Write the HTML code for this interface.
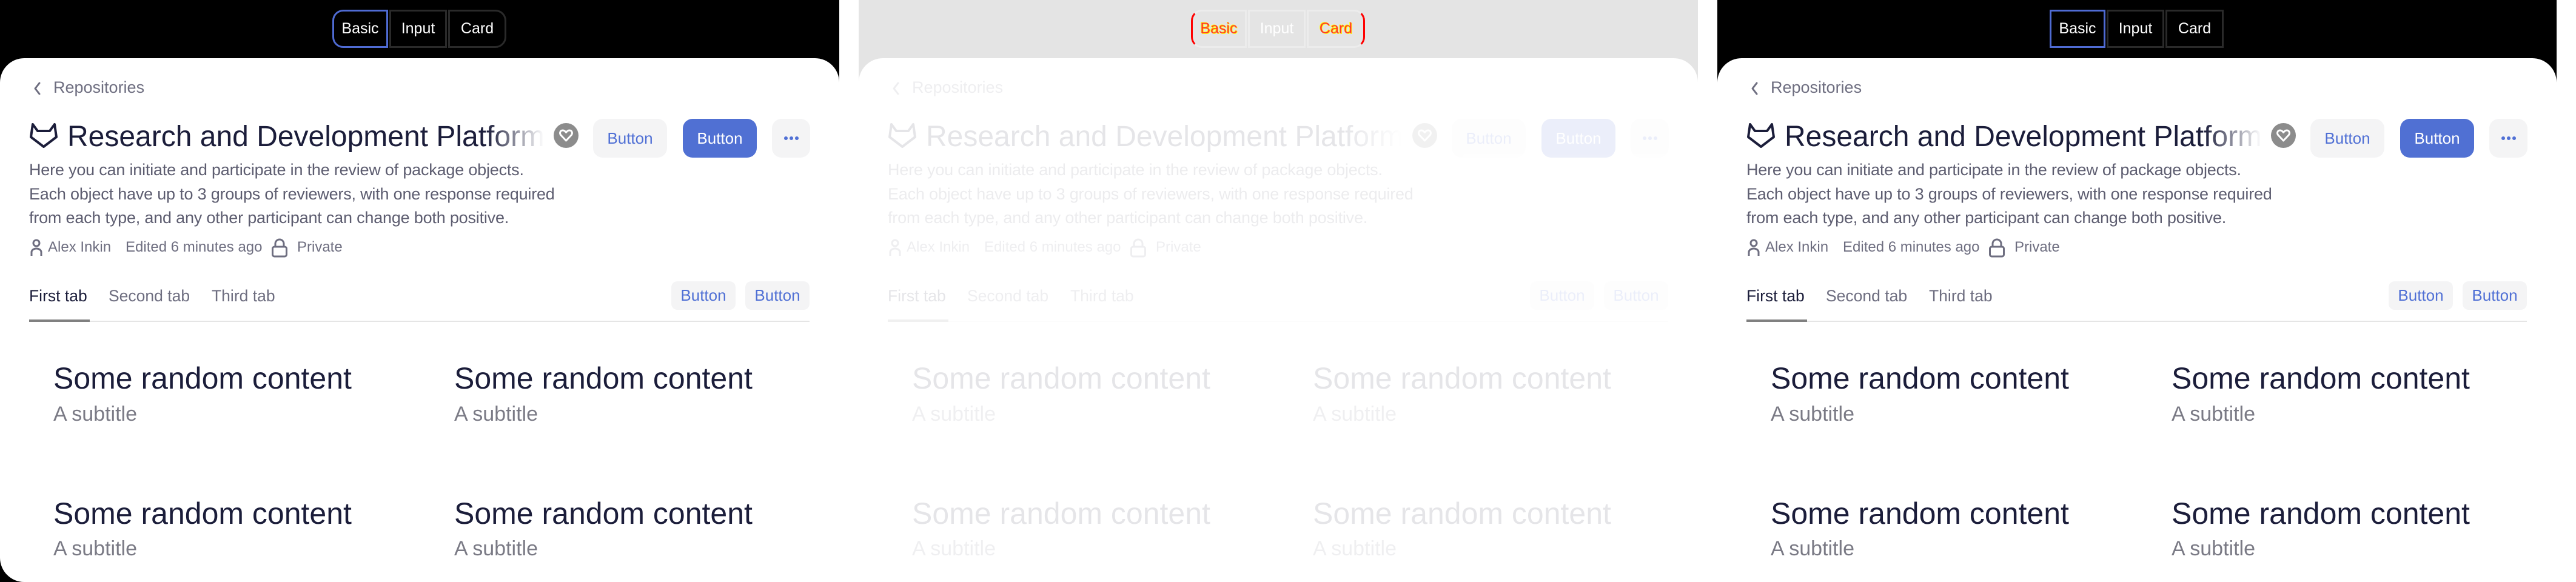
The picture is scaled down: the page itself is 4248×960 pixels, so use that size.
<!DOCTYPE html>
<html><head><meta charset="utf-8"><style>
*{box-sizing:border-box;margin:0;padding:0}
body{width:4248px;height:960px;background:#fff;position:relative;overflow:hidden;font-family:"Liberation Sans",sans-serif}
.panel{position:absolute;top:0;width:1384px;height:960px;background:#000;overflow:hidden}
.p2{background:#e4e4e4}
.pills{position:absolute;left:548px;top:16px;height:63px;width:287px;display:flex}
.pills div{height:63px;display:flex;align-items:center;justify-content:center;color:#fff;font-size:25px;border:3px solid #2a2a2a}
.pills .b{width:92px;border-color:#4f6bd3;border-radius:18px 0 0 18px}
.pills .i{width:95px;margin-left:2px}
.pills .c{width:96px;margin-left:2px;border-radius:0 18px 18px 0}
.p3 .pills div{border-radius:0!important}
.p2 .pills div{border-color:#ececec;color:#fff}
.p2 .pills .b{border-left:3px solid #f00}
.p2 .pills .c{border-right:3px solid #f00}
.p2 .pills .b,.p2 .pills .c{color:#f33;text-shadow:1px 1px 0 #ff0,-1px -1px 0 #ff0}
.card{position:absolute;left:0;top:96px;width:1384px;height:864px;background:#fff;border-radius:40px 40px 0 0}
.p1 .card{border-radius:40px 40px 0 40px}
.in{position:absolute;left:0;top:-96px;width:1384px;height:960px}
.p2 .in{opacity:.11}
.a{position:absolute;white-space:nowrap}
.grey{color:#6e6e80}
.dark{color:#1b1d3a}
.btn{position:absolute;background:#f4f4f5;border-radius:16px;color:#5070d5;display:flex;align-items:center;justify-content:center;font-size:26px}
.title{font-size:48px;color:#1b1d3a;left:111px;top:196px;width:786px;overflow:hidden;line-height:60px;-webkit-mask-image:linear-gradient(90deg,#000 88%,transparent)}
.desc{left:48px;top:261px;font-size:27px;line-height:39.5px;color:#5d5d70;letter-spacing:-0.2px}
.ct{font-size:50px;color:#1b1d3a}
.cs{font-size:34px;color:#7a7a85}
.tb{font-size:26.5px}
</style></head><body>
<div class="panel p1" style="left:0">
<div class="pills"><div class="b">Basic</div><div class="i">Input</div><div class="c">Card</div></div>
<div class="card"><div class="in">
<svg class="a" style="left:52px;top:132px" width="20" height="28" viewBox="0 0 20 28"><path d="M13 5 L6 14 L13 23" fill="none" stroke="#6e6e80" stroke-width="3" stroke-linecap="round" stroke-linejoin="round"/></svg>
<div class="a grey" style="left:88px;top:129px;font-size:27px">Repositories</div>
<svg class="a" style="left:48px;top:201px" width="48" height="44" viewBox="0 0 48 44"><path d="M6 4 L14 15 L34 15 L42 4 L45 25 L24 41 L3 25 Z" fill="none" stroke="#1b1d3a" stroke-width="4" stroke-linejoin="round"/></svg>
<div class="a title">Research and Development Platform</div>
<svg class="a" style="left:913px;top:203px" width="41" height="41" viewBox="0 0 41 41"><circle cx="20.5" cy="20.5" r="20.5" fill="#8c8c8c"/><path d="M20.5 29 L12 20 C9 16.5 11 12 15 12 C17.5 12 19 13.5 20.5 15.5 C22 13.5 23.5 12 26 12 C30 12 32 16.5 29 20 Z" fill="none" stroke="#fff" stroke-width="3" stroke-linejoin="round"/></svg>
<div class="btn" style="left:978px;top:196px;width:122px;height:64px">Button</div>
<div class="btn" style="left:1126px;top:196px;width:122px;height:64px;background:#5070d3;color:#fff">Button</div>
<div class="btn" style="left:1273px;top:196px;width:63px;height:64px"><svg width="26" height="8" viewBox="0 0 26 8"><circle cx="4" cy="4" r="3" fill="#5070d5"/><circle cx="13" cy="4" r="3" fill="#5070d5"/><circle cx="22" cy="4" r="3" fill="#5070d5"/></svg></div>
<div class="a desc">Here you can initiate and participate in the review of package objects.<br>Each object have up to 3 groups of reviewers, with one response required<br>from each type, and any other participant can change both positive.</div>
<svg class="a" style="left:50px;top:394px" width="20" height="30" viewBox="0 0 20 30"><circle cx="10" cy="7" r="5" fill="none" stroke="#6e6e80" stroke-width="3"/><path d="M2 28 V22 A8 6 0 0 1 18 22 V28" fill="none" stroke="#6e6e80" stroke-width="3"/></svg>
<div class="a grey" style="left:79px;top:394px;font-size:24px">Alex Inkin</div>
<div class="a grey" style="left:207px;top:394px;font-size:24px">Edited 6 minutes ago</div>
<svg class="a" style="left:447px;top:392px" width="28" height="34" viewBox="0 0 28 34"><path d="M7 15 V10 A7 7 0 0 1 21 10 V15" fill="none" stroke="#6e6e80" stroke-width="3"/><rect x="2.5" y="15" width="23" height="16" rx="3" fill="none" stroke="#6e6e80" stroke-width="3"/></svg>
<div class="a grey" style="left:490px;top:394px;font-size:24px">Private</div>
<div class="a dark tb" style="left:48px;top:473px">First tab</div>
<div class="a grey tb" style="left:179px;top:473px">Second tab</div>
<div class="a grey tb" style="left:349px;top:473px">Third tab</div>
<div class="btn" style="left:1107px;top:464px;width:106px;height:47px;border-radius:10px">Button</div>
<div class="btn" style="left:1229px;top:464px;width:106px;height:47px;border-radius:10px">Button</div>
<div class="a" style="left:48px;top:529px;width:1287px;height:2px;background:#e5e5e5"></div>
<div class="a" style="left:48px;top:527px;width:100px;height:4px;background:#808080"></div>
<div class="a ct" style="left:88px;top:595px">Some random content</div>
<div class="a cs" style="left:88px;top:664px">A subtitle</div>
<div class="a ct" style="left:749px;top:595px">Some random content</div>
<div class="a cs" style="left:749px;top:664px">A subtitle</div>
<div class="a ct" style="left:88px;top:818px">Some random content</div>
<div class="a cs" style="left:88px;top:886px">A subtitle</div>
<div class="a ct" style="left:749px;top:818px">Some random content</div>
<div class="a cs" style="left:749px;top:886px">A subtitle</div>
</div></div></div>
<script>
var p=document.querySelector('.p1');
var a=p.cloneNode(true);a.className='panel p2';a.style.left='1416px';document.body.appendChild(a);
var b=p.cloneNode(true);b.className='panel p3';b.style.left='2832px';document.body.appendChild(b);
</script>
</body></html>
